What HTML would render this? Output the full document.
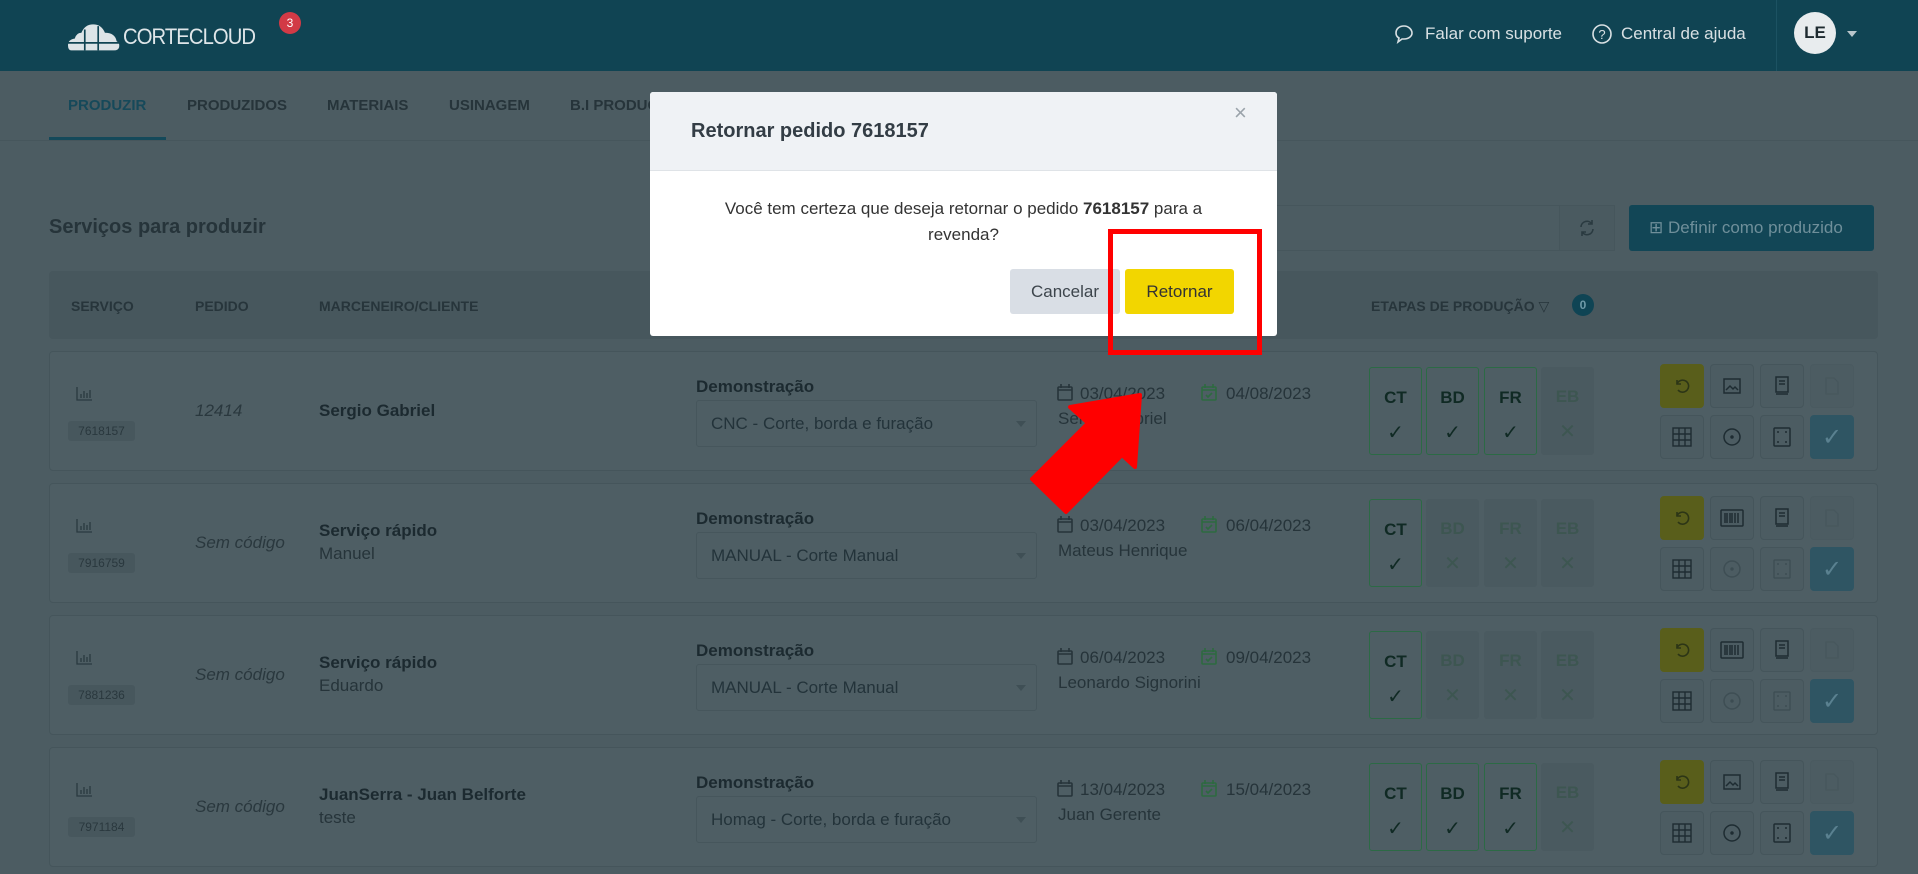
<!DOCTYPE html>
<html><head><meta charset="utf-8"><style>
*{box-sizing:border-box;margin:0;padding:0}
body{width:1918px;height:874px;overflow:hidden;background:#4c5c62;font-family:"Liberation Sans",sans-serif;position:relative;color:#1f2d33}
.a{position:absolute}
.hdr{left:0;top:0;width:1918px;height:71px;background:#104453}
.nav{left:0;top:71px;width:1918px;height:70px;border-bottom:1px solid #46565c}
.tab{top:97px;font-size:15px;font-weight:bold;color:#26343a}
.card{left:49px;width:1829px;height:120px;background:#4e5e64;border:1px solid #45555b;border-radius:4px}
.th{top:298px;font-size:14px;font-weight:bold;color:#27353b}
.et{width:53px;height:88px;border-radius:3px;text-align:center;font-weight:bold;font-size:17px;padding-top:20px}
.on{border:1.5px solid #2c6a45;color:#102a24}
.off{background:#4a5a60;color:#3d5651}
.mk{display:block;margin-top:12px;font-weight:normal;font-size:20px}
.bt{width:44px;height:44px;border:1px solid #45555b;border-radius:4px;background:#4c5c62;display:flex;align-items:center;justify-content:center}
.sel{width:341px;height:47px;border:1px solid #46565c;border-radius:3px;font-size:17px;color:#23333a;padding:13px 14px}
</style></head><body>
<div class="a hdr"></div>
<svg class="a" style="left:68px;top:22px" width="52" height="30" viewBox="0 0 62 34"><path d="M4 33 Q0 33 0 27 Q0 20 8 19 Q10 12 16 12 Q20 2 30 2 Q40 2 44 12 Q56 12 58 22 Q62 24 61 29 Q60 33 55 33Z" fill="#dde4e7"/><path d="M20 8V33M36 4V33M0 24H61" stroke="#104453" stroke-width="2"/></svg>
<div class="a" style="left:123px;top:24px;font-size:22px;color:#dfe6e9;letter-spacing:-1px;transform:scaleX(0.92);transform-origin:left">CORTECLOUD</div>
<div class="a" style="left:279px;top:12px;width:22px;height:22px;border-radius:11px;background:#d23a46;color:#fff;font-size:12px;text-align:center;line-height:22px">3</div>
<svg class="a" style="left:1394px;top:24px" width="20" height="20" viewBox="0 0 20 20"><path d="M10 2C5 2 2 5 2 9c0 2 1 4 3 5l-1 4 4-3c1 0 1 0 2 0 5 0 8-3 8-6s-3-7-8-7z" fill="none" stroke="#d8e0e3" stroke-width="1.6"/></svg>
<div class="a" style="left:1425px;top:24px;font-size:17px;color:#d8e0e3">Falar com suporte</div>
<svg class="a" style="left:1591px;top:23px" width="22" height="22" viewBox="0 0 22 22"><circle cx="11" cy="11" r="9" fill="none" stroke="#d8e0e3" stroke-width="1.6"/><text x="11" y="16" text-anchor="middle" font-size="13" fill="#d8e0e3" font-family="Liberation Sans">?</text></svg>
<div class="a" style="left:1621px;top:24px;font-size:17px;color:#d8e0e3">Central de ajuda</div>
<div class="a" style="left:1776px;top:0;width:1px;height:71px;background:#1c5262"></div>
<div class="a" style="left:1794px;top:12px;width:42px;height:42px;border-radius:21px;background:#e8ecee;color:#1e2b30;font-weight:bold;font-size:17px;text-align:center;line-height:42px">LE</div>
<div class="a" style="left:1847px;top:31px;border:5px solid transparent;border-top:6px solid #b9c6cb"></div>

<div class="a nav"></div>
<div class="a tab" style="left:68px;color:#16495a">PRODUZIR</div>
<div class="a" style="left:49px;top:137px;width:117px;height:3px;background:#14495a"></div>
<div class="a tab" style="left:187px">PRODUZIDOS</div>
<div class="a tab" style="left:327px">MATERIAIS</div>
<div class="a tab" style="left:449px">USINAGEM</div>
<div class="a tab" style="left:570px">B.I PRODUÇÃO</div>

<div class="a" style="left:49px;top:216px;font-size:20px;font-weight:bold;color:#26343a">Serviços para produzir</div>
<div class="a" style="left:1200px;top:205px;width:415px;height:46px;border:1px solid #46565c;border-radius:3px"></div>
<div class="a" style="left:1559px;top:205px;width:56px;height:46px;background:#4a5a60;border:1px solid #46565c;display:flex;align-items:center;justify-content:center"><svg width="20" height="20" viewBox="0 0 20 20" fill="none" stroke="#2a3a40" stroke-width="1.6"><path d="M4 9a6 6 0 0 1 11-3M16 11a6 6 0 0 1-11 3M15 2v4h-4M5 18v-4h4"/></svg></div>
<div class="a" style="left:1629px;top:205px;width:245px;height:46px;background:#124656;border-radius:3px;color:#6f8f9a;font-size:17px;padding:13px 0 0 20px">⊞ Definir como produzido</div>

<div class="a" style="left:49px;top:271px;width:1829px;height:68px;background:#47575d;border-radius:4px"></div>
<div class="a th" style="left:71px">SERVIÇO</div>
<div class="a th" style="left:195px">PEDIDO</div>
<div class="a th" style="left:319px">MARCENEIRO/CLIENTE</div>
<div class="a th" style="left:1371px">ETAPAS DE PRODUÇÃO <span style="font-weight:normal">▽</span></div>
<div class="a" style="left:1572px;top:294px;width:22px;height:22px;border-radius:11px;background:#0f4454;color:#6f9aa8;font-size:12px;text-align:center;line-height:22px;font-weight:bold">0</div>

<div id="rows"></div>
<script>
var R=[
['7618157','12414',true,'Sergio Gabriel','','CNC - Corte, borda e furação','03/04/2023','04/08/2023','Sergio Gabriel',[1,1,1,0],0],
['7916759','Sem código',false,'Serviço rápido','Manuel','MANUAL - Corte Manual','03/04/2023','06/04/2023','Mateus Henrique',[1,0,0,0],1],
['7881236','Sem código',false,'Serviço rápido','Eduardo','MANUAL - Corte Manual','06/04/2023','09/04/2023','Leonardo Signorini',[1,0,0,0],1],
['7971184','Sem código',false,'JuanSerra - Juan Belforte','teste','Homag - Corte, borda e furação','13/04/2023','15/04/2023','Juan Gerente',[1,1,1,0],0]];
var h='',L=['CT','BD','FR','EB'],XS=[1369,1426,1484,1541],BX=[1660,1710,1760,1810];
R.forEach(function(r,i){var t=351+i*132;
h+='<div class="a card" style="top:'+t+'px"></div>';
h+='<div class="a" style="left:76px;top:'+(t+36)+'px"><svg width="16" height="14" viewBox="0 0 16 14" fill="none" stroke="#2a3a40" stroke-width="1.3"><path d="M1 0v13h15M5 11V7M8 11V4M11 11V6M14 11V3"/></svg></div>';
h+='<div class="a" style="left:68px;top:'+(t+70)+'px;width:67px;height:20px;background:#47575d;border-radius:3px;font-size:12px;color:#2a383e;text-align:center;line-height:20px">'+r[0]+'</div>';
h+='<div class="a" style="left:195px;top:'+(t+50)+'px;font-size:17px;font-style:italic;color:#2a383e">'+r[1]+'</div>';
if(r[4]){h+='<div class="a" style="left:319px;top:'+(t+38)+'px;font-size:17px;font-weight:bold;color:#1c2a30">'+r[3]+'</div><div class="a" style="left:319px;top:'+(t+61)+'px;font-size:17px;color:#26343a">'+r[4]+'</div>';}
else h+='<div class="a" style="left:319px;top:'+(t+50)+'px;font-size:17px;font-weight:bold;color:#1c2a30">'+r[3]+'</div>';
h+='<div class="a" style="left:696px;top:'+(t+26)+'px;font-size:17px;font-weight:bold;color:#1c2a30">Demonstração</div>';
h+='<div class="a sel" style="left:696px;top:'+(t+49)+'px">'+r[5]+'<span style="position:absolute;right:10px;top:20px;border:5px solid transparent;border-top:6px solid #3f4f55"></span></div>';
h+='<div class="a" style="left:1057px;top:'+(t+33)+'px;font-size:17px;color:#26343a"><svg width="16" height="17" viewBox="0 0 16 17" fill="none" stroke="#26343a" stroke-width="1.6" style="vertical-align:-2px;margin-right:7px"><rect x="1" y="3" width="14" height="13" rx="1"/><path d="M1 6h14M4 0v4M12 0v4"/></svg>'+r[6]+'</div>';
h+='<div class="a" style="left:1201px;top:'+(t+33)+'px;font-size:17px;color:#26343a"><svg width="16" height="17" viewBox="0 0 16 17" fill="none" stroke="#2d6a40" stroke-width="1.6" style="vertical-align:-2px;margin-right:9px"><rect x="1" y="3" width="14" height="13" rx="1"/><path d="M1 6h14M4 0v4M12 0v4M5 11l2 2 4-4"/></svg>'+r[7]+'</div>';
h+='<div class="a" style="left:1058px;top:'+(t+58)+'px;font-size:17px;color:#26343a">'+r[8]+'</div>';
r[9].forEach(function(o,j){h+='<div class="a et '+(o?'on':'off')+'" style="left:'+XS[j]+'px;top:'+(t+16)+'px">'+L[j]+'<span class="mk">'+(o?'✓':'✕')+'</span></div>';});
var ic=['<svg width="20" height="20" viewBox="0 0 20 20" fill="none" stroke="#2c3516" stroke-width="1.6"><path d="M5 4v4h4"/><path d="M5 8a6 6 0 1 1 1 6"/></svg>',
(r[10]?'<svg width="24" height="18" viewBox="0 0 24 18" fill="none" stroke="#1e2c32" stroke-width="1.5"><rect x="1" y="1" width="22" height="16" rx="1"/><path d="M5 4v10M7 4v10M10 4v10M12 4v10M15 4v10M18 4v10"/></svg>':'<svg width="18" height="16" viewBox="0 0 18 16" fill="none" stroke="#1e2c32" stroke-width="1.5"><rect x="1" y="1" width="16" height="14"/><path d="M3 12l4-4 3 3 2-2 3 3"/></svg>'),
'<svg width="16" height="20" viewBox="0 0 16 20" fill="none" stroke="#1e2c32" stroke-width="1.5"><rect x="2" y="1" width="12" height="15"/><path d="M2 18h12M5 5h6M5 8h6"/></svg>',
'<svg width="14" height="18" viewBox="0 0 14 18" fill="none" stroke="#47575d" stroke-width="1.3"><path d="M1 1h8l4 4v12H1z"/></svg>',
'<svg width="20" height="20" viewBox="0 0 20 20" fill="none" stroke="#1e2c32" stroke-width="1.4"><rect x="1" y="1" width="18" height="18"/><path d="M1 7h18M1 13h18M7 1v18M13 1v18"/></svg>',
'<svg width="20" height="20" viewBox="0 0 20 20" fill="none" stroke="'+(r[10]?'#3e4e54':'#1e2c32')+'" stroke-width="1.5"><circle cx="10" cy="10" r="8"/><circle cx="10" cy="10" r="1" fill="#1e2c32"/></svg>',
'<svg width="18" height="20" viewBox="0 0 18 20" fill="none" stroke="'+(r[10]?'#3e4e54':'#1e2c32')+'" stroke-width="1.5"><rect x="1" y="1" width="16" height="18" rx="1"/><path d="M5 5h0M13 5h0M5 15h0M13 15h0" stroke-linecap="round" stroke-width="2"/></svg>',
'<span style="color:#5a8190;font-size:24px">✓</span>'];
for(var k=0;k<8;k++){var bg=k==0?'background:#595e1b;border-color:#595e1b':(k==7?'background:#2f5563;border-color:#2f5563':(k==3?'border-color:#4a5a60':''));
h+='<div class="a bt" style="left:'+BX[k%4]+'px;top:'+(t+(k<4?13:64))+'px;'+bg+'">'+ic[k]+'</div>';}
});
document.getElementById('rows').innerHTML=h;
</script>

<div class="a" style="left:650px;top:92px;width:627px;height:244px;background:#fff;border-radius:3px;overflow:hidden">
<div style="height:79px;background:#eff2f5;border-bottom:1px solid #dfe3e7;position:relative">
<div class="a" style="left:41px;top:28px;font-size:20px;font-weight:bold;color:#333d45">Retornar pedido 7618157</div>
<div class="a" style="left:584px;top:8px;font-size:22px;color:#9aa3aa">×</div>
</div>
<div style="text-align:center;font-size:17px;color:#333;line-height:26px;padding:25px 40px 0">Você tem certeza que deseja retornar o pedido <b>7618157</b> para a<br>revenda?</div>
<div class="a" style="left:360px;top:177px;width:110px;height:45px;background:#d9dee5;border-radius:3px;font-size:17px;color:#3d454c;text-align:center;line-height:45px">Cancelar</div>
<div class="a" style="left:475px;top:177px;width:109px;height:45px;background:#f2d600;border-radius:3px;font-size:17px;color:#333;text-align:center;line-height:45px">Retornar</div>
</div>
<div class="a" style="left:1108px;top:229px;width:154px;height:126px;border:5px solid #ff0000"></div>
<svg class="a" style="left:0;top:0" width="1918" height="874"><polygon points="1140,395 1135,467 1122,455 1066,512 1032,479 1088,423 1070,407" fill="#ff0000" stroke="#ff0000" stroke-width="4" stroke-linejoin="round"/></svg>
</body></html>
